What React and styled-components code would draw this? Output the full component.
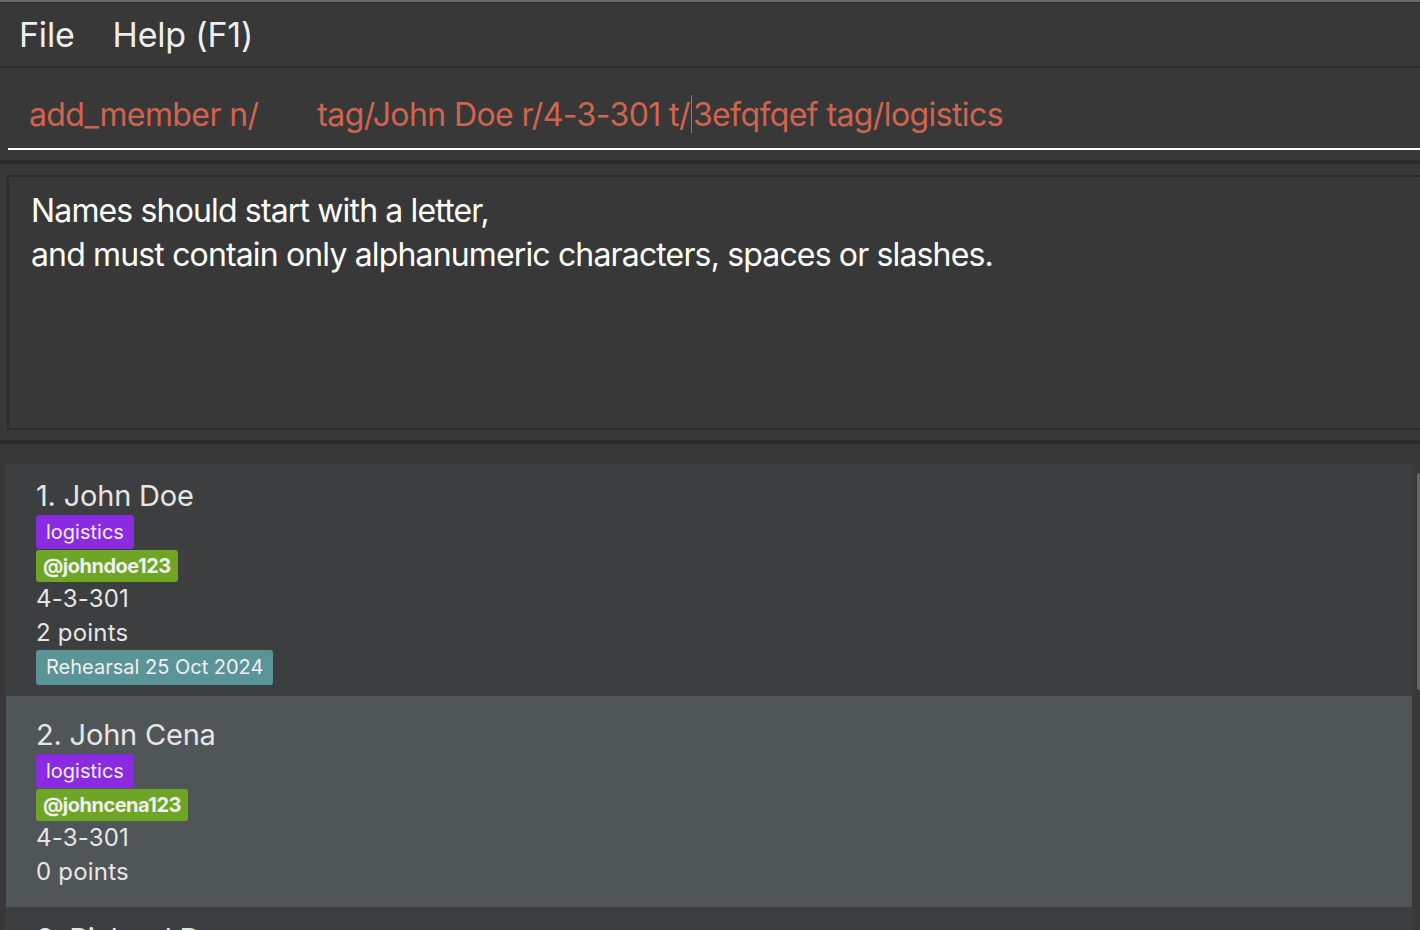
import React from 'react'
import styled, { createGlobalStyle } from 'styled-components'

const GlobalStyle = createGlobalStyle`
    html, body {
        margin: 0;
        padding: 0;
        background: #383838;
    }
    body {
        font-family: Inter, "Noto Sans", "Liberation Sans", sans-serif;
    }
`

const Window = styled.div`
    width: 1420px;
    height: 930px;
    overflow: hidden;
    display: flex;
    flex-direction: column;
    background: #383838;
    border-top: 2px solid #6a6a6a;
    box-sizing: border-box;
`

const MenuBar = styled.div`
    height: 66px;
    display: flex;
    align-items: center;
    gap: 38px;
    padding-left: 19px;
    border-top: 1px solid #2a2a2a;
    border-bottom: 2px solid #2b2b2b;
    box-sizing: border-box;
    flex-shrink: 0;
`

const MenuItem = styled.span`
    font-size: 34px;
    color: #efefef;
    letter-spacing: -0.2px;
`

const CommandSection = styled.div`
    padding: 0 0 10px 8px;
    border-bottom: 4px solid #2b2b2b;
    flex-shrink: 0;
`

const CommandInput = styled.div`
    height: 82px;
    box-sizing: border-box;
    display: flex;
    align-items: center;
    padding: 12px 0 0 21px;
    border-bottom: 2px solid #ffffff;
    font-size: 32px;
    color: #d0644f;
    white-space: pre;
    letter-spacing: -0.6px;
`

const Caret = styled.span`
    display: inline-block;
    width: 0;
    height: 38px;
    border-left: 1.5px solid #d0644f;
    margin: 0 1px;
`

const ResultSection = styled.div`
    padding: 11px 0 10px 7px;
    border-bottom: 4px solid #2b2b2b;
    flex-shrink: 0;
`

const ResultBox = styled.div`
    height: 255px;
    box-sizing: border-box;
    border: 2px solid #2d2d2d;
    border-right: none;
    padding: 12px 22px;
    font-size: 32px;
    line-height: 44px;
    color: #ffffff;
    letter-spacing: -0.85px;
`

const ListArea = styled.div`
    position: relative;
    flex: 1;
    padding: 20px 8px 0 6px;
    display: flex;
    flex-direction: column;
`

const ScrollThumb = styled.div`
    position: absolute;
    right: 0;
    top: 29px;
    width: 3px;
    height: 217px;
    background: #666666;
    border-radius: 2px 0 0 2px;
`

const Card = styled.div`
    background: ${p => (p.$selected ? '#505558' : '#3c3e40')};
    padding: ${p => p.$pad}px 30px;
    display: flex;
    flex-direction: column;
    align-items: flex-start;
    color: #e6e6e6;
    flex-shrink: 0;
`

const Name = styled.div`
    font-size: 29px;
    line-height: 40px;
    letter-spacing: -0.2px;
    padding-top: 1px;
    margin-bottom: -1px;
`

const Tag = styled.span`
    background: ${p => p.$bg};
    color: #f0f0f0;
    font-size: 20px;
    font-weight: ${p => (p.$bold ? 700 : 400)};
    height: ${p => p.$h || 34}px;
    line-height: ${p => p.$h || 34}px;
    padding: 0 ${p => p.$px || 10}px;
    border-radius: 3px;
    margin-bottom: ${p => p.$mb || 0}px;
    letter-spacing: ${p => (p.$bold ? -0.5 : 0)}px;
`

const Line = styled.div`
    font-size: 24px;
    line-height: 34px;
    letter-spacing: 0.2px;
`

const members = [
    {
        name: '1. John Doe',
        tag: 'logistics',
        handle: '@johndoe123',
        room: '4-3-301',
        points: '2 points',
        event: 'Rehearsal 25 Oct 2024',
        pad: 11,
    },
    {
        name: '2. John Cena',
        tag: 'logistics',
        handle: '@johncena123',
        room: '4-3-301',
        points: '0 points',
        pad: 18,
        selected: true,
    },
    {
        name: '3. Richard Doe',
        tag: 'logistics',
        handle: '@richarddoe123',
        room: '4-3-301',
        points: '0 points',
        pad: 11,
    },
]

const MemberCard = ({ member }) => (
    <Card $pad={member.pad} $selected={member.selected}>
        <Name>{member.name}</Name>
        <Tag $bg="#8a2be2" $mb={1}>{member.tag}</Tag>
        <Tag $bg="#6fa525" $h={32} $px={7} $bold>{member.handle}</Tag>
        <Line>{member.room}</Line>
        <Line>{member.points}</Line>
        {member.event && <Tag $bg="#5b9497" $h={35}>{member.event}</Tag>}
    </Card>
)

const App = () => {
    return (
        <Window>
            <GlobalStyle />
            <MenuBar>
                <MenuItem>File</MenuItem>
                <MenuItem>Help (F1)</MenuItem>
            </MenuBar>
            <CommandSection>
                <CommandInput>
                    {'add_member n/       tag/John Doe r/4-3-301 t/'}
                    <Caret />
                    {'3efqfqef tag/logistics'}
                </CommandInput>
            </CommandSection>
            <ResultSection>
                <ResultBox>
                    Names should start with a letter,
                    <br />
                    and must contain only alphanumeric characters, spaces or slashes.
                </ResultBox>
            </ResultSection>
            <ListArea>
                {members.map(m => (
                    <MemberCard key={m.name} member={m} />
                ))}
                <ScrollThumb />
            </ListArea>
        </Window>
    )
}

export default App
